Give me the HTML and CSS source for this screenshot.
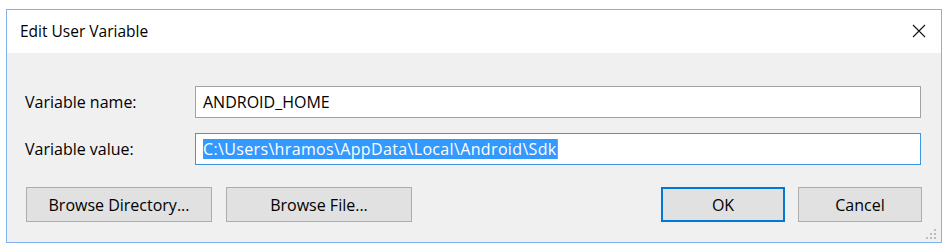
FILE: index.html
```html
<!DOCTYPE html>
<html lang="en">
<head>
  <meta charset="UTF-8">
  <title>Edit User Variable</title>
  <link rel="stylesheet" href="styles.css">
</head>
<body>
  <div class="window">
    <div class="titlebar">
      <span class="title">Edit User Variable</span>
      <svg class="close" width="14" height="14" viewBox="0 0 14 14">
        <path d="M1 1 L13 13 M13 1 L1 13" stroke="#111" stroke-width="1.1" fill="none"/>
      </svg>
    </div>

    <div class="content">
      <div class="row">
        <label class="label">Variable name:</label>
        <div class="field">ANDROID_HOME</div>
      </div>
      <div class="row row-value">
        <label class="label">Variable value:</label>
        <div class="field focused"><span class="selected">C:\Users\hramos\AppData\Local\Android\Sdk</span><span class="caret"></span></div>
      </div>

      <div class="buttons">
        <button class="btn wide">Browse Directory...</button>
        <button class="btn wide">Browse File...</button>
        <span class="spacer"></span>
        <button class="btn default">OK</button>
        <button class="btn">Cancel</button>
      </div>
    </div>

    <svg class="grip" width="12" height="12" viewBox="0 0 12 12">
      <rect x="9" y="1" width="2" height="2" fill="#bcbcbc"/>
      <rect x="5" y="5" width="2" height="2" fill="#bcbcbc"/>
      <rect x="9" y="5" width="2" height="2" fill="#bcbcbc"/>
      <rect x="1" y="9" width="2" height="2" fill="#bcbcbc"/>
      <rect x="5" y="9" width="2" height="2" fill="#bcbcbc"/>
      <rect x="9" y="9" width="2" height="2" fill="#bcbcbc"/>
    </svg>
  </div>
</body>
</html>
```

FILE: styles.css
```css
body {
  margin: 9px 5px 5px 6px;
  background: #fff;
  font-family: 'Open Sans', 'Noto Sans', sans-serif;
  font-size: 16px;
  color: #000;
}

.window {
  position: relative;
  width: 934px;
  height: 232px;
  border: 1px solid #7eb4ea;
  display: flex;
  flex-direction: column;
}

.titlebar {
  height: 43px;
  background: #fff;
  display: flex;
  align-items: center;
  padding: 0 15px 0 13px;
}

.title {
  flex: 1;
  font-size: 15.5px;
  margin-top: -2px;
}

.close {
  margin-top: -2px;
}

.content {
  flex: 1;
  background: #f0f0f0;
  padding: 33px 20px 20px 18px;
  display: flex;
  flex-direction: column;
}

.row {
  display: flex;
  align-items: center;
  height: 32px;
}

.row-value {
  margin-top: 15px;
}

.label {
  width: 170px;
  flex-shrink: 0;
}

.field {
  flex: 1;
  height: 30px;
  border: 1px solid #a2a2a2;
  background: #fff;
  display: flex;
  align-items: center;
  padding-left: 7px;
  white-space: nowrap;
}

.field.focused {
  border-color: #3d97e0;
}

.selected {
  background: #3399ff;
  color: #fff;
  line-height: 20px;
  letter-spacing: 0.35px;
}

.caret {
  width: 1px;
  height: 20px;
  background: #e08a3a;
}

.buttons {
  display: flex;
  margin-top: 22px;
  margin-left: 1px;
  margin-right: -1px;
  gap: 14px;
}

.spacer {
  flex: 1;
}

.btn {
  height: 35px;
  width: 124px;
  background: #e1e1e1;
  border: 1px solid #adadad;
  font-family: inherit;
  font-size: 16px;
  color: #000;
  padding: 0;
}

.btn.wide {
  width: 186px;
}

.btn.default {
  border: 2px solid #0078d7;
  margin-right: -1px;
}

.grip {
  position: absolute;
  right: 4px;
  bottom: 2px;
}
```
